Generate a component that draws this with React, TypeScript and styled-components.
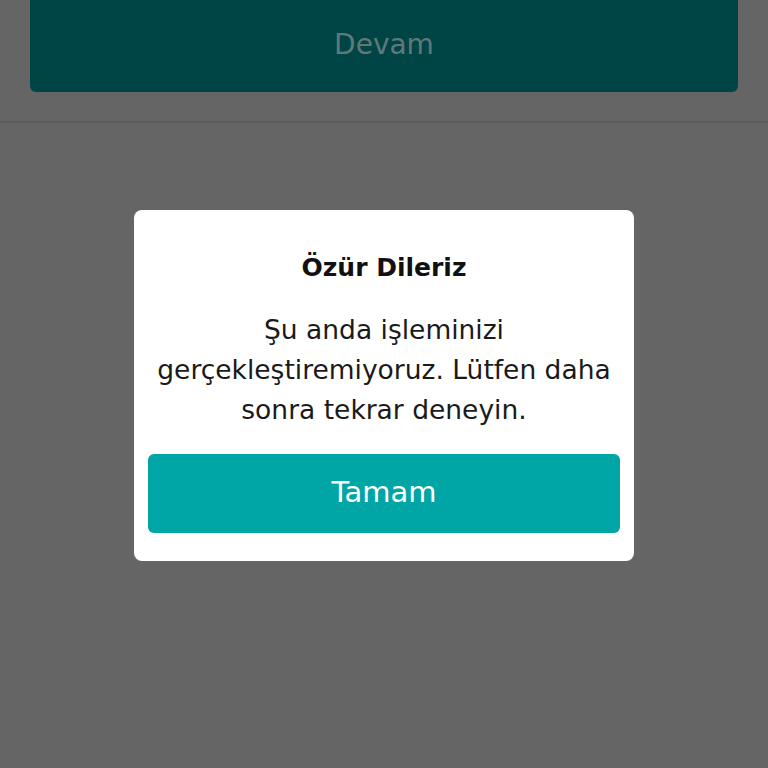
import styled, { createGlobalStyle } from "styled-components";

const GlobalStyle = createGlobalStyle`
    html, body {
        margin: 0;
        padding: 0;
        background: #656565;
    }
    body {
        font-family: "DejaVu Sans", "Liberation Sans", sans-serif;
    }
`;

const Screen = styled.div`
    width: 768px;
    height: 768px;
    display: flex;
    flex-direction: column;
    background: #656565;
    overflow: hidden;
`;

const Header = styled.div`
    height: 123px;
    padding: 0 30px;
    box-sizing: border-box;
    border-bottom: 2px solid #5b5b5b;
`;

const ContinueBtn = styled.div`
    height: 92px;
    background: #004545;
    border-radius: 0 0 6px 6px;
    display: flex;
    align-items: center;
    justify-content: center;
    color: #607878;
    font-size: 28px;
    padding-bottom: 4px;
    box-sizing: border-box;
`;

const Body = styled.div`
    flex: 1;
    display: flex;
    justify-content: center;
    padding-top: 87px;
`;

const Dialog = styled.div`
    width: 500px;
    height: 351px;
    box-sizing: border-box;
    background: #ffffff;
    border-radius: 8px;
    padding: 0 14px 28px;
    display: flex;
    flex-direction: column;
    align-items: stretch;
`;

const Title = styled.h2`
    margin: 42px 0 0;
    text-align: center;
    font-size: 25px;
    font-weight: bold;
    line-height: 32px;
    color: #111111;
`;

const Message = styled.p`
    margin: 26px 0 0;
    text-align: center;
    font-size: 26.5px;
    line-height: 40px;
    color: #1a1a1a;
`;

const OkBtn = styled.button`
    margin-top: auto;
    height: 79px;
    border: none;
    border-radius: 6px;
    background: #00a5a5;
    color: #ffffff;
    font-family: "DejaVu Sans", "Liberation Sans", sans-serif;
    font-size: 29px;
    padding-bottom: 4px;
`;

function App() {
    return (
        <>
            <GlobalStyle />
            <Screen>
                <Header>
                    <ContinueBtn>Devam</ContinueBtn>
                </Header>
                <Body>
                    <Dialog>
                        <Title>Özür Dileriz</Title>
                        <Message>
                            Şu anda işleminizi
                            <br />
                            gerçekleştiremiyoruz. Lütfen daha
                            <br />
                            sonra tekrar deneyin.
                        </Message>
                        <OkBtn>Tamam</OkBtn>
                    </Dialog>
                </Body>
            </Screen>
        </>
    );
}

export default App;
